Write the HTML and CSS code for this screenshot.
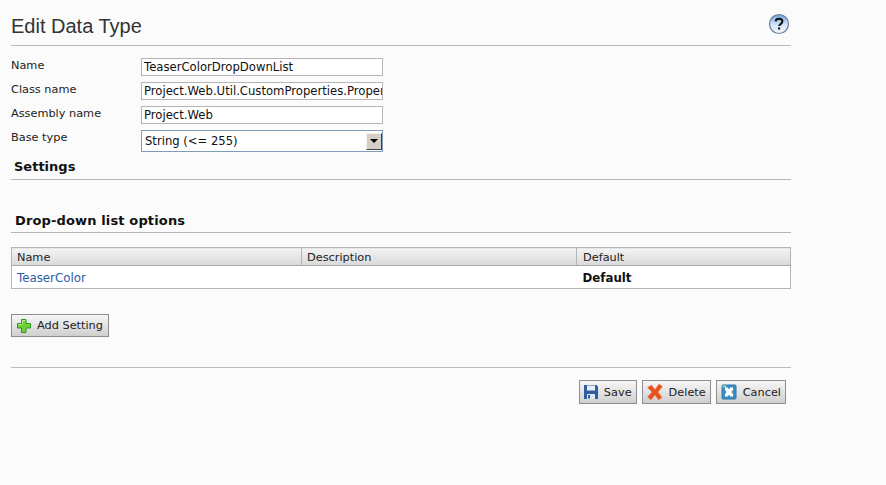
FILE: index.html
```html
<!DOCTYPE html>
<html lang="en">
<head>
  <meta charset="UTF-8" />
  <title>Edit Data Type</title>
  <link rel="stylesheet" href="styles.css">
</head>
<body>
  <div class="page">
    <div class="page-header">
      <h1>Edit Data Type</h1>
      <svg class="help" width="22" height="22" viewBox="0 0 22 22">
        <defs>
          <linearGradient id="helpFill" x1="0" y1="0" x2="0" y2="1">
            <stop offset="0" stop-color="#6f9fe0"/>
            <stop offset="0.55" stop-color="#d5e6fa"/>
            <stop offset="1" stop-color="#f4f9ff"/>
          </linearGradient>
        </defs>
        <circle cx="11" cy="11" r="9.5" fill="url(#helpFill)" stroke="#6c7f96" stroke-width="1.2"/>
        <path d="M7.6 8.4C7.8 6.6 9.2 5.8 11 5.8c2 0 3.4 1 3.4 2.7 0 1.4-.9 2-1.8 2.6-.9.6-1.3 1-1.3 2" fill="none" stroke="#111" stroke-width="2"/>
        <rect x="10.1" y="14.4" width="2" height="2.2" fill="#111"/>
      </svg>
    </div>

    <div class="form">
      <div class="row">
        <label>Name</label>
        <input class="field" type="text" value="TeaserColorDropDownList" />
      </div>
      <div class="row">
        <label>Class name</label>
        <input class="field" type="text" value="Project.Web.Util.CustomProperties.PropertyDropDownList" />
      </div>
      <div class="row">
        <label>Assembly name</label>
        <input class="field" type="text" value="Project.Web" />
      </div>
      <div class="row">
        <label>Base type</label>
        <div class="select">
          <span class="select-value">String (&lt;= 255)</span>
          <span class="select-arrow"><i></i></span>
        </div>
      </div>
    </div>

    <h2 class="section settings">Settings</h2>
    <h2 class="section options">Drop-down list options</h2>

    <table class="grid">
      <thead>
        <tr>
          <th class="col-name">Name</th>
          <th class="col-desc">Description</th>
          <th class="col-default">Default</th>
        </tr>
      </thead>
      <tbody>
        <tr>
          <td><a href="#">TeaserColor</a></td>
          <td></td>
          <td class="strong">Default</td>
        </tr>
      </tbody>
    </table>

    <button class="btn add-btn" type="button">
      <svg width="16" height="16" viewBox="0 0 16 16">
        <path d="M5.500 1.500h4.500v4h4.500v4.500h-4.500v4.500H5.500V10h-4V5.500h4z" fill="#6fd03c" stroke="#2c9a1c" stroke-width="1"/>
        <path d="M6.500 5.500v-3h2.500M2.500 6.500h3" fill="none" stroke="#c4f2a0" stroke-width="1"/>
      </svg>
      Add Setting
    </button>

    <div class="actions">
      <button class="btn" type="button">
        <svg width="14" height="16" viewBox="0 0 14 16">
          <path d="M0 1h12.500L14 2.500V15H0z" fill="#2f5f9f"/>
          <rect x="3" y="1.500" width="8" height="5" fill="#e8eef6"/>
          <rect x="3" y="10" width="8" height="5" fill="#dfe8f2"/>
          <rect x="4" y="11" width="2" height="3.500" fill="#2f5f9f"/>
        </svg>
        Save
      </button>
      <button class="btn" type="button">
        <svg width="16" height="18" viewBox="0 0 16 18">
          <path d="M.5 4.500 4.500 2 8 6.500 12 1l3.500 2.500L11 9l4 5.500L11.500 17 8 12l-4 5-3.500-3L5 9z" fill="#e8501f" stroke="#f08a60" stroke-width=".6"/>
        </svg>
        Delete
      </button>
      <button class="btn" type="button">
        <svg width="16" height="16" viewBox="0 0 16 16">
          <rect x="1" y="1" width="14" height="14" rx="1" fill="#3d8fc4" stroke="#2f77a8"/>
          <path d="M1.500 1.500h4v2h-4z" fill="#8fd0c4"/>
          <path d="M4 3.500h2.500L8 5.200 9.500 3.500H12v2.500L10.300 8 12 10v2.500H9.500L8 10.800 6.500 12.500H4V10L5.700 8 4 6z" fill="#fff"/>
        </svg>
        Cancel
      </button>
    </div>
  </div>
</body>
</html>
```

FILE: styles.css
```css
body {
  margin: 0;
  background: #fbfbfb;
  color: #222;
  font-family: "DejaVu Sans", sans-serif;
  font-size: 11.3px;
}
.page {
  width: 780px;
  margin-left: 11px;
}
.page-header {
  display: flex;
  justify-content: space-between;
  align-items: flex-start;
  height: 45px;
  padding-right: 1px;
  border-bottom: 1px solid #bbb;
}
h1 {
  margin: 14px 0 0;
  font-family: "Liberation Sans", sans-serif;
  font-size: 20px;
  font-weight: normal;
  line-height: 24px;
  color: #333;
}
.help {
  margin-top: 13px;
}
.form {
  margin-top: 12px;
}
.row {
  display: flex;
  align-items: flex-start;
  margin-bottom: 6px;
}
.row label {
  width: 130px;
  line-height: 15px;
}
.field {
  box-sizing: border-box;
  width: 242px;
  height: 18px;
  margin: 0;
  padding: 0 0 0 2px;
  border: 1px solid #b5b5b5;
  background: #fff;
  color: #111;
  font-family: "DejaVu Sans", sans-serif;
  font-size: 11.65px;
}
.select {
  box-sizing: border-box;
  display: flex;
  justify-content: space-between;
  align-items: center;
  width: 242px;
  height: 22px;
  border: 1px solid #7f9db9;
  background: #fff;
  color: #111;
  padding: 0 0 0 3px;
  font-size: 11.6px;
}
.select-arrow {
  display: flex;
  align-items: center;
  justify-content: center;
  width: 16px;
  height: 17px;
  background: #d4d0c8;
  border: 1px solid;
  border-color: #f4f2ee #404040 #404040 #f4f2ee;
  box-sizing: border-box;
}
.select-arrow i {
  width: 0;
  height: 0;
  border-left: 4px solid transparent;
  border-right: 4px solid transparent;
  border-top: 4px solid #000;
}
.section {
  margin: 0;
  padding-left: 3px;
  font-size: 13px;
  font-weight: bold;
  line-height: 16px;
  color: #111;
  border-bottom: 1px solid #b5b5b5;
}
.settings {
  margin-top: 7px;
  padding-bottom: 4px;
}
.options {
  margin-top: 33px;
  padding-bottom: 3px;
  padding-left: 4px;
  letter-spacing: .14px;
}
.grid {
  width: 780px;
  margin-top: 14px;
  border-collapse: collapse;
  table-layout: fixed;
  background: #fff;
  border: 1px solid #b5b5b5;
}
.grid th {
  height: 16px;
  padding: 1px 5px 0;
  font-weight: normal;
  text-align: left;
  color: #222;
  background: linear-gradient(#f4f4f4, #d9d9d9);
  border: 1px solid #b5b5b5;
  border-bottom-color: #a8a8a8;
}
.grid td {
  height: 21px;
  padding: 1px 5px 0;
  font-size: 11.8px;
}
.col-name {
  width: 279px;
}
.col-desc {
  width: 264px;
}
.grid .col-default,
.grid .strong {
  padding-left: 6px;
}
.grid a {
  color: #2a5da6;
  text-decoration: none;
}
.strong {
  font-weight: bold;
  color: #111;
}
.btn {
  display: inline-flex;
  align-items: center;
  gap: 6px;
  height: 24px;
  padding: 0 4px;
  border: 1px solid #8e8e8e;
  background: linear-gradient(#f6f6f6, #cfcfcf);
  color: #222;
  font-family: "DejaVu Sans", sans-serif;
  font-size: 11.3px;
}
.add-btn {
  height: 23px;
  margin-top: 25px;
  padding-right: 5px;
  gap: 5px;
}
.actions {
  display: flex;
  justify-content: flex-end;
  gap: 5px;
  margin-top: 30px;
  padding-top: 12px;
  padding-right: 5px;
  border-top: 1px solid #bbb;
}
```
